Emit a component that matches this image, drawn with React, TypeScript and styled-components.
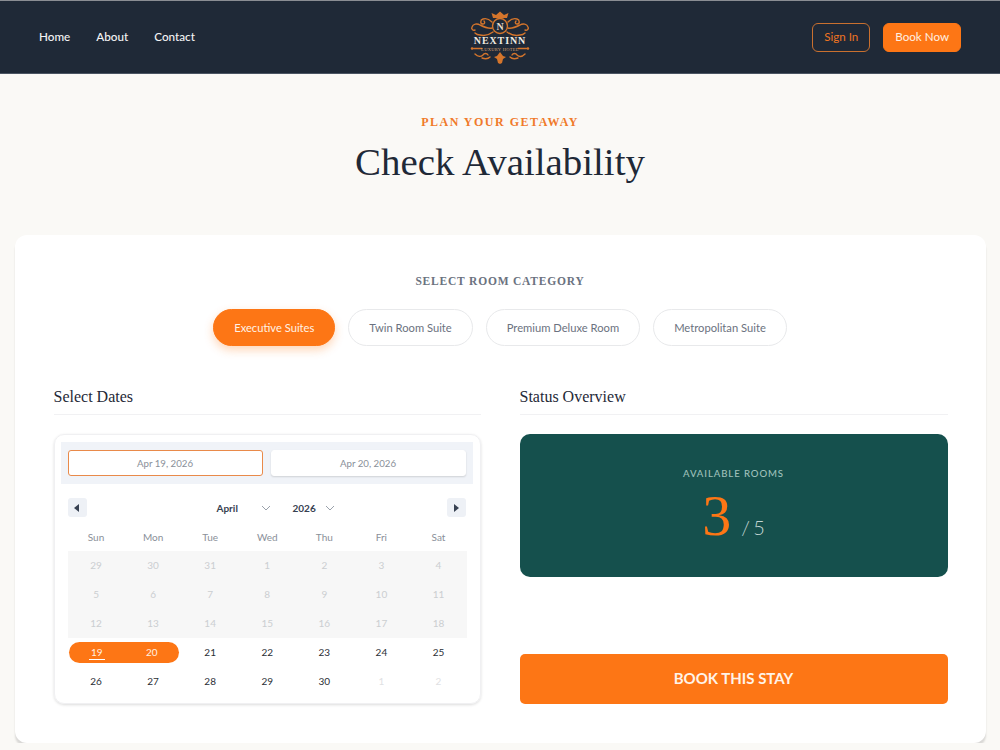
import styled, { createGlobalStyle } from "styled-components";

const orange = "#fd7615";
const navy = "#1f2937";
const serif = `"Liberation Serif", "Times New Roman", serif`;

const GlobalStyle = createGlobalStyle`
     * {
          box-sizing: border-box;
     }
     body {
          margin: 0;
          background-color: #faf9f6;
          font-family: Lato, "Noto Sans", sans-serif;
     }
`;

const StyledHeader = styled.header`
     height: 74px;
     padding: 0 39px;
     display: grid;
     grid-template-columns: 1fr auto 1fr;
     align-items: center;
     background-color: ${navy};
     border-top: 1px solid #8a8d93;
     border-bottom: 1px solid #4b5563;
`;
const StyledNav = styled.nav`
     display: flex;
     gap: 26px;
     padding-bottom: 2px;
`;
const StyledNavLink = styled.a`
     color: #f4f4f4;
     font-size: 11.7px;
     font-weight: 500;
`;
const StyledLogo = styled.svg`
     margin-top: 2px;
`;
const StyledActions = styled.div`
     display: flex;
     justify-content: flex-end;
     gap: 13px;
`;
const StyledHeaderButton = styled.button<{ $filled?: boolean }>`
     height: 29px;
     padding: 0 11px 2px;
     border-radius: 6px;
     border: 1px solid ${(props) => (props.$filled ? orange : "#c9702f")};
     background-color: ${(props) => (props.$filled ? orange : "transparent")};
     color: ${(props) => (props.$filled ? "#fff0e2" : "#ee7422")};
     font-family: inherit;
     font-size: 11.6px;
`;

const StyledHero = styled.section`
     height: 161px;
     padding-top: 40px;
     text-align: center;
`;
const StyledEyebrow = styled.div`
     color: #f07a2a;
     font-family: ${serif};
     font-size: 12px;
     font-weight: 700;
     letter-spacing: 1.5px;
     line-height: 16px;
`;
const StyledTitle = styled.h1`
     margin: 9px 0 0;
     color: ${navy};
     font-family: ${serif};
     font-size: 38.9px;
     font-weight: 400;
     line-height: 46px;
`;

const StyledCard = styled.main`
     margin: 0 14.5px;
     height: 508px;
     padding: 39px;
     background-color: #fff;
     border-radius: 12px;
     box-shadow: 0 4px 2px rgba(0, 0, 0, 0.13);
`;
const StyledCategoryLabel = styled.div`
     color: #6b7280;
     font-family: ${serif};
     font-size: 11.5px;
     font-weight: 700;
     letter-spacing: 0.8px;
     line-height: 14px;
     text-align: center;
`;
const StyledPills = styled.div`
     margin-top: 21px;
     display: flex;
     justify-content: center;
     gap: 13px;
`;
const StyledPill = styled.button<{ $active?: boolean }>`
     height: 37px;
     padding: 0 20px;
     border-radius: 19px;
     border: 1px solid ${(props) => (props.$active ? orange : "#e8e9eb")};
     background-color: ${(props) => (props.$active ? orange : "#fff")};
     color: ${(props) => (props.$active ? "#fff2e6" : "#6b7280")};
     font-family: inherit;
     font-size: 11.2px;
     box-shadow: ${(props) =>
          props.$active ? "0 4px 10px rgba(253, 118, 21, 0.3)" : "none"};
`;
const StyledColumns = styled.div`
     margin-top: 37px;
     display: grid;
     grid-template-columns: 427px 428px;
     gap: 39px;
`;
const StyledColumn = styled.section`
     display: flex;
     flex-direction: column;
`;
const StyledColumnTitle = styled.h2`
     margin: 0 0 19px;
     height: 32px;
     color: ${navy};
     font-family: ${serif};
     font-size: 16px;
     font-weight: 400;
     line-height: 28px;
     border-bottom: 1px solid #f1f1f3;
`;

const StyledCalendar = styled.div`
     height: 270px;
     padding: 7px 7px 0 6px;
     border-radius: 10px;
     border: 1px solid #f0f0f2;
     box-shadow: 0 1px 3px rgba(0, 0, 0, 0.14);
`;
const StyledDateStrip = styled.div`
     height: 42px;
     padding: 0 7px;
     display: grid;
     grid-template-columns: 1fr 1fr;
     gap: 8px;
     align-items: center;
     background-color: #f0f3f8;
`;
const StyledDateInput = styled.div<{ $focused?: boolean }>`
     height: 26px;
     border-radius: 3px;
     background-color: #fff;
     border: 1px solid ${(props) => (props.$focused ? "#e98a4a" : "#fff")};
     box-shadow: ${(props) =>
          props.$focused ? "none" : "0 1px 2px rgba(0, 0, 0, 0.14)"};
     color: #8a9099;
     font-size: 9.7px;
     line-height: 24px;
     text-align: center;
`;
const StyledMonthBar = styled.div`
     margin-top: 14px;
     padding: 0 7px;
     display: flex;
     align-items: center;
     justify-content: space-between;
`;
const StyledArrowButton = styled.div`
     width: 19px;
     height: 19px;
     display: flex;
     align-items: center;
     justify-content: center;
     border-radius: 3px;
     background-color: #eef1f6;
`;
const StyledMonthPickers = styled.div`
     display: flex;
     align-items: center;
     margin-left: 18px;
`;
const StyledPicker = styled.span<{ $wide?: boolean }>`
     display: flex;
     align-items: center;
     justify-content: space-between;
     width: ${(props) => (props.$wide ? "54px" : "42px")};
     margin-right: ${(props) => (props.$wide ? "22px" : "0")};
     color: #374151;
     font-size: 10px;
     font-weight: 700;
`;
const StyledGrid = styled.div`
     margin-top: 6px;
     margin-left: 7px;
     width: 399.5px;
     display: grid;
     grid-template-columns: repeat(7, 1fr);
`;
const StyledWeekday = styled.div`
     height: 28px;
     color: #8a9099;
     font-size: 10px;
     line-height: 28px;
     text-align: center;
`;
const StyledDay = styled.div<{ $tone: "past" | "current" | "muted" }>`
     position: relative;
     height: 29px;
     background-color: ${(props) =>
          props.$tone === "past" ? "#f7f7f7" : "transparent"};
     color: ${(props) =>
          props.$tone === "current"
               ? "#2b2f36"
               : props.$tone === "past"
                 ? "#cbced1"
                 : "#dfe1e3"};
     font-size: 10px;
     line-height: 29px;
     text-align: center;
`;
const StyledRangeDay = styled.div<{ $start?: boolean }>`
     height: 21px;
     margin: 4px ${(props) => (props.$start ? "0 4px 1.5px" : "2.5px 4px 0")};
     background-color: ${orange};
     border-radius: ${(props) =>
          props.$start ? "11px 0 0 11px" : "0 11px 11px 0"};
     color: #fff0e2;
     font-size: 10px;
     line-height: 21px;
     text-align: center;
`;
const StyledToday = styled.span`
     display: inline-block;
     line-height: 14px;
     border-bottom: 1.5px solid #fff;
     padding: 0 2px;
`;

const StyledStatusPanel = styled.div`
     height: 143px;
     padding-top: 33px;
     border-radius: 10px;
     background-color: #15504d;
     text-align: center;
`;
const StyledStatusLabel = styled.div`
     color: #9fc0bb;
     font-size: 9.6px;
     font-weight: 500;
     letter-spacing: 0.9px;
     line-height: 14px;
`;
const StyledCount = styled.div`
     margin-top: 4px;
     display: flex;
     justify-content: center;
     align-items: baseline;
     gap: 10px;
`;
const StyledCountValue = styled.span`
     color: ${orange};
     font-family: ${serif};
     font-size: 58px;
     line-height: 62px;
`;
const StyledCountTotal = styled.span`
     color: #c3d6d3;
     font-size: 20px;
     font-weight: 300;
     word-spacing: -2px;
`;
const StyledBookButton = styled.button`
     margin-top: 77px;
     height: 50px;
     padding-bottom: 3px;
     border: none;
     border-radius: 5px;
     background-color: ${orange};
     color: #fff3e8;
     font-family: inherit;
     font-size: 15px;
     font-weight: 700;
`;

const Logo = () => (
     <StyledLogo width="66" height="56" viewBox="0 0 66 56" aria-label="NextInn">
          <g fill="none" stroke="#d4752c" strokeWidth="1.4" strokeLinecap="round">
               <circle cx="33" cy="16" r="7.5" />
               <path d="M25 12c-3-3-6-4-9-3-3 1-3 5 0 5 2 0 2-2 1-3" />
               <path d="M41 12c3-3 6-4 9-3 3 1 3 5 0 5-2 0-2-2-1-3" />
               <path d="M25 18c-4 1-8-1-12-3-3-2-7-1-8 2-1 2 1 4 3 3" />
               <path d="M41 18c4 1 8-1 12-3 3-2 7-1 8 2 1 2-1 4-3 3" />
               <path d="M26 22c-4 3-9 4-13 3-2 0-4-1-5-2M40 22c4 3 9 4 13 3 2 0 4-1 5-2" />
               <path d="M5 38.5h10M51 38.5h10" />
               <path d="M8 44c3 3 6 3 8 1 1-2 4-2 5 0M58 44c-3 3-6 3-8 1-1-2-4-2-5 0" />
               <path d="M15 48c3 1 6 1 8-1M51 48c-3 1-6 1-8-1" />
          </g>
          <path d="M26 8l-1.5-5 4.5 2 4-3.5 4 3.5 4.5-2L40 8z" fill="#d4752c" />
          <path d="M33 42l3 4 3 1-3 2-1 4-2 1-2-1-1-4-3-2 3-1z" fill="#d4752c" />
          <circle cx="5" cy="38.5" r="1.2" fill="#d4752c" />
          <circle cx="61" cy="38.5" r="1.2" fill="#d4752c" />
          <text x="33" y="19.5" textAnchor="middle" fontFamily="Liberation Serif" fontSize="10" fontWeight="700" fill="#e8dccb">
               N
          </text>
          <text x="33" y="34" textAnchor="middle" fontFamily="Liberation Serif" fontSize="10" fontWeight="700" letterSpacing="0.9" fill="#f0ebe2">
               NEXTINN
          </text>
          <text x="33" y="40.5" textAnchor="middle" fontFamily="Liberation Serif" fontSize="4.5" letterSpacing="0.3" fill="#d9a070">
               LUXURY HOTEL
          </text>
     </StyledLogo>
);

const Chevron = () => (
     <svg width="10" height="6" viewBox="0 0 10 6">
          <path d="M1 1l4 4 4-4" fill="none" stroke="#9aa1ab" strokeWidth="1" />
     </svg>
);

const Arrow = (props: { right?: boolean }) => (
     <svg width="6" height="8" viewBox="0 0 6 8">
          <path d={props.right ? "M1 0l5 4-5 4z" : "M5 0L0 4l5 4z"} fill="#374151" />
     </svg>
);

const categories = [
     "Executive Suites",
     "Twin Room Suite",
     "Premium Deluxe Room",
     "Metropolitan Suite",
];
const weekdays = ["Sun", "Mon", "Tue", "Wed", "Thu", "Fri", "Sat"];
const pastDays = [29, 30, 31, 1, 2, 3, 4, 5, 6, 7, 8, 9, 10, 11, 12, 13, 14, 15, 16, 17, 18];

export default () => {
     return (
          <>
               <GlobalStyle />
               <StyledHeader>
                    <StyledNav>
                         <StyledNavLink>Home</StyledNavLink>
                         <StyledNavLink>About</StyledNavLink>
                         <StyledNavLink>Contact</StyledNavLink>
                    </StyledNav>
                    <Logo />
                    <StyledActions>
                         <StyledHeaderButton>Sign In</StyledHeaderButton>
                         <StyledHeaderButton $filled>Book Now</StyledHeaderButton>
                    </StyledActions>
               </StyledHeader>
               <StyledHero>
                    <StyledEyebrow>PLAN YOUR GETAWAY</StyledEyebrow>
                    <StyledTitle>Check Availability</StyledTitle>
               </StyledHero>
               <StyledCard>
                    <StyledCategoryLabel>SELECT ROOM CATEGORY</StyledCategoryLabel>
                    <StyledPills>
                         {categories.map((category, index) => (
                              <StyledPill key={category} $active={index === 0}>
                                   {category}
                              </StyledPill>
                         ))}
                    </StyledPills>
                    <StyledColumns>
                         <StyledColumn>
                              <StyledColumnTitle>Select Dates</StyledColumnTitle>
                              <StyledCalendar>
                                   <StyledDateStrip>
                                        <StyledDateInput $focused>Apr 19, 2026</StyledDateInput>
                                        <StyledDateInput>Apr 20, 2026</StyledDateInput>
                                   </StyledDateStrip>
                                   <StyledMonthBar>
                                        <StyledArrowButton>
                                             <Arrow />
                                        </StyledArrowButton>
                                        <StyledMonthPickers>
                                             <StyledPicker $wide>
                                                  April <Chevron />
                                             </StyledPicker>
                                             <StyledPicker>
                                                  2026 <Chevron />
                                             </StyledPicker>
                                        </StyledMonthPickers>
                                        <StyledArrowButton>
                                             <Arrow right />
                                        </StyledArrowButton>
                                   </StyledMonthBar>
                                   <StyledGrid>
                                        {weekdays.map((day) => (
                                             <StyledWeekday key={day}>{day}</StyledWeekday>
                                        ))}
                                        {pastDays.map((day, index) => (
                                             <StyledDay key={index} $tone="past">
                                                  {day}
                                             </StyledDay>
                                        ))}
                                        <StyledRangeDay $start>
                                             <StyledToday>19</StyledToday>
                                        </StyledRangeDay>
                                        <StyledRangeDay>20</StyledRangeDay>
                                        {[21, 22, 23, 24, 25, 26, 27, 28, 29, 30].map((day) => (
                                             <StyledDay key={day} $tone="current">
                                                  {day}
                                             </StyledDay>
                                        ))}
                                        {[1, 2].map((day) => (
                                             <StyledDay key={day} $tone="muted">
                                                  {day}
                                             </StyledDay>
                                        ))}
                                   </StyledGrid>
                              </StyledCalendar>
                         </StyledColumn>
                         <StyledColumn>
                              <StyledColumnTitle>Status Overview</StyledColumnTitle>
                              <StyledStatusPanel>
                                   <StyledStatusLabel>AVAILABLE ROOMS</StyledStatusLabel>
                                   <StyledCount>
                                        <StyledCountValue>3</StyledCountValue>
                                        <StyledCountTotal>/ 5</StyledCountTotal>
                                   </StyledCount>
                              </StyledStatusPanel>
                              <StyledBookButton>BOOK THIS STAY</StyledBookButton>
                         </StyledColumn>
                    </StyledColumns>
               </StyledCard>
          </>
     );
};
